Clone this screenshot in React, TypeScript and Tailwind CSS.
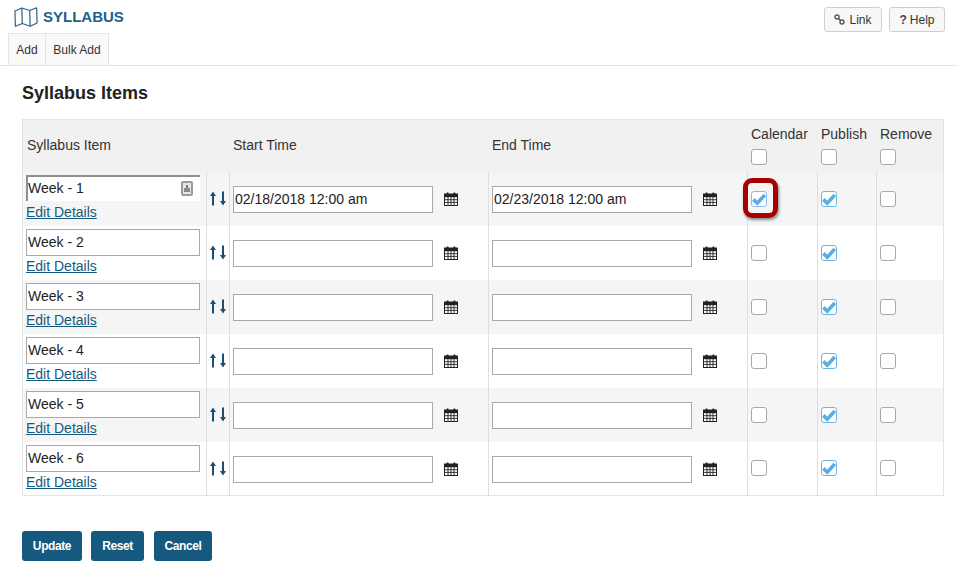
import React from "react";

const MapIcon = () => (
  <svg width="24" height="22" viewBox="0 0 26 22" fill="none" stroke="#2a6188" strokeWidth="1.3" strokeLinejoin="round" className="shrink-0">
    <path d="M1 4.5 L8.5 1.2 L17 4 L24.5 1 L25 17.5 L17.5 21 L9 18 L1.5 21 Z" />
    <path d="M8.5 1.2 L9 18 M17 4 L17.5 21" />
  </svg>
);

const Arrows = () => (
  <svg width="18" height="15" viewBox="0 0 18 15" fill="#1d4f73" className="block">
    <path d="M4 0.5 L7 5 H5 V14.5 H3 V5 H1 Z" />
    <path d="M13 5 V0.5 H15 V10 H17 L14 14.5 L11 10 H13 Z" />
  </svg>
);

const Calendar = () => (
  <svg width="14" height="14" viewBox="0 0 14 14" className="block shrink-0 -mt-[1px]">
    <rect x="0.5" y="2" width="13" height="11.5" fill="#fff" stroke="#222" />
    <rect x="0.5" y="2" width="13" height="3.2" fill="#222" />
    <rect x="2.6" y="0.5" width="2" height="3" rx="0.6" fill="#222" />
    <rect x="9.4" y="0.5" width="2" height="3" rx="0.6" fill="#222" />
    <path d="M4 5 V13 M7 5 V13 M10 5 V13 M1 7.7 H13 M1 10.4 H13" stroke="#222" strokeWidth="0.9" />
  </svg>
);

const Check = ({ checked = false, focus = false }: { checked?: boolean; focus?: boolean }) => (
  <span
    className={`relative block w-4 h-4 rounded-[3px] border ${
      checked ? (focus ? "border-[#8ab8f0] bg-white" : "border-[#6db5e6] bg-white") : "border-[#a8a8a8] bg-white"
    }`}
  >
    {checked && (
      <svg width="14" height="14" viewBox="0 0 14 14" className="absolute left-0 top-0">
        <path d="M1.4 7.4 L5.3 11.2 L12.8 3" fill="none" stroke="#5aade2" strokeWidth="3.6" />
      </svg>
    )}
  </span>
);

const TextBox = ({ value = "" }: { value?: string }) => (
  <input
    readOnly
    value={value}
    className="block w-[200px] h-[27px] border border-[#a9a9a9] bg-white px-[1px] pb-[2px] text-[14px] text-[#222] outline-none"
  />
);

const weeks = ["Week - 1", "Week - 2", "Week - 3", "Week - 4", "Week - 5", "Week - 6"];

export default function App() {
  return (
    <div className="w-[965px] h-[572px] bg-white overflow-hidden text-[14px] text-[#333] font-['Liberation_Sans',Arial,sans-serif]">
      <div className="w-[957px] h-[66px] border-b border-[#e4e4e4] relative">
        <div className="flex items-center gap-[5px] pl-[14px] pt-[6px] h-[33px] pb-[5px]">
          <MapIcon />
          <span className="font-bold text-[15px] text-[#21608a] leading-none mt-[-1px]">SYLLABUS</span>
        </div>
        <div className="absolute left-[824px] top-[7px] flex gap-[7px]">
          <button className="w-[58px] h-[25px] rounded-[3px] border border-[#cfcfcf] bg-[#f8f8f8] text-[12px] text-[#333] flex items-center justify-center gap-[4px]">
            <svg width="11" height="11" viewBox="0 0 11 11" fill="none" stroke="#555" strokeWidth="1.4">
              <circle cx="3" cy="3" r="2" />
              <circle cx="8" cy="8" r="2" />
              <path d="M4.5 4.5 L6.5 6.5" />
            </svg>
            Link
          </button>
          <button className="w-[56px] h-[25px] rounded-[3px] border border-[#cfcfcf] bg-[#f8f8f8] text-[12px] text-[#333] flex items-center justify-center gap-[3px]">
            <span className="font-bold text-[#444]">?</span>
            Help
          </button>
        </div>
        <div className="flex pl-[8px]">
          <div className="h-[32px] w-[38px] border border-b-0 border-[#e4e4e4] bg-[#f9f9f9] text-[12px] flex items-center justify-center">Add</div>
          <div className="h-[32px] w-[63px] border border-l-0 border-b-0 border-[#e4e4e4] bg-[#f9f9f9] text-[12px] flex items-center justify-center">Bulk Add</div>
        </div>
      </div>

      <div className="pl-[22px]">
        <h1 className="pt-[17px] h-[53px] text-[18px] leading-[20px] font-bold text-[#222]">Syllabus Items</h1>

        <table className="w-[921px] table-fixed border-collapse border border-[#e4e4e4]">
          <colgroup>
            <col className="w-[184px]" />
            <col className="w-[23px]" />
            <col className="w-[259px]" />
            <col className="w-[259px]" />
            <col className="w-[70px]" />
            <col className="w-[59px]" />
            <col className="w-[67px]" />
          </colgroup>
          <thead>
            <tr className="h-[52px] bg-[#f1f1f1] font-normal">
              <th className="pl-[4px] pb-[1px] text-left font-normal align-middle">Syllabus Item</th>
              <th />
              <th className="pl-[3.5px] pb-[1px] text-left font-normal align-middle">Start Time</th>
              <th className="pl-[3.5px] pb-[1px] text-left font-normal align-middle">End Time</th>
              {["Calendar", "Publish", "Remove"].map((h) => (
                <th key={h} className="pl-[3.5px] text-left font-normal align-top pt-[5px]">
                  <div className="leading-[18px] mb-[6px]">{h}</div>
                  <Check />
                </th>
              ))}
            </tr>
          </thead>
          <tbody>
            {weeks.map((w, i) => (
              <tr key={w} className={`h-[54px] ${i % 2 === 0 ? "bg-[#f5f5f5]" : "bg-white"}`}>
                <td className="pl-[3px] align-top pt-[3px]">
                  {i === 0 ? (
                    <div className="relative w-[174px] h-[26px] bg-white border-t-[2px] border-l-[2px] border-[#8f8f8f] leading-[23px] text-[#222]">
                      Week - 1
                      <span className="absolute right-[7px] top-[4px] w-[12px] h-[15px] rounded-[2px] border-2 border-[#9a9a9a] bg-[#e6e6e6] flex flex-col items-center justify-center">
                        <span className="block w-[2px] h-[3px] bg-[#777]" />
                        <span className="block w-[6px] h-[4px] bg-[#888]" />
                      </span>
                    </div>
                  ) : (
                    <input
                      readOnly
                      value={w}
                      className="block w-[174px] h-[27px] border border-[#a9a9a9] bg-white px-[1px] text-[14px] text-[#222] outline-none"
                    />
                  )}
                  <a className={`block leading-[16px] text-[#15597e] underline ${i === 0 ? "mt-[3px]" : "mt-[2px]"}`}>Edit Details</a>
                </td>
                <td className="border-l border-r border-[#dedede] pl-[2px]">
                  <Arrows />
                </td>
                <td className="pl-[3px] pt-[2px] border-r border-[#dedede]">
                  <div className="flex items-center gap-[11px]">
                    <TextBox value={i === 0 ? "02/18/2018 12:00 am" : ""} />
                    <Calendar />
                  </div>
                </td>
                <td className="pl-[3px] pt-[2px] border-r border-[#dedede]">
                  <div className="flex items-center gap-[11px]">
                    <TextBox value={i === 0 ? "02/23/2018 12:00 am" : ""} />
                    <Calendar />
                  </div>
                </td>
                <td className="pl-[3px] border-r border-[#dedede]">
                  {i === 0 ? (
                    <div className="relative w-4 h-4">
                      <Check checked focus />
                      <span className="absolute -left-[8px] -top-[13px] w-[35px] h-[40px] rounded-[9px] border-[5px] border-[#a80000] shadow-[1px_2px_3px_rgba(0,0,0,0.45)]" />
                    </div>
                  ) : (
                    <Check />
                  )}
                </td>
                <td className="pl-[3px] border-r border-[#dedede]">
                  <Check checked />
                </td>
                <td className="pl-[3px]">
                  <Check />
                </td>
              </tr>
            ))}
          </tbody>
        </table>

        <div className="flex mt-[35px]">
          <button className="w-[60px] h-[30px] rounded-[3px] bg-[#15597e] text-white text-[12px] tracking-[-0.4px] font-bold">Update</button>
          <button className="ml-[9px] w-[53px] h-[30px] rounded-[3px] bg-[#15597e] text-white text-[12px] tracking-[-0.4px] font-bold">Reset</button>
          <button className="ml-[10px] w-[58px] h-[30px] rounded-[3px] bg-[#15597e] text-white text-[12px] tracking-[-0.4px] font-bold">Cancel</button>
        </div>
      </div>
    </div>
  );
}
